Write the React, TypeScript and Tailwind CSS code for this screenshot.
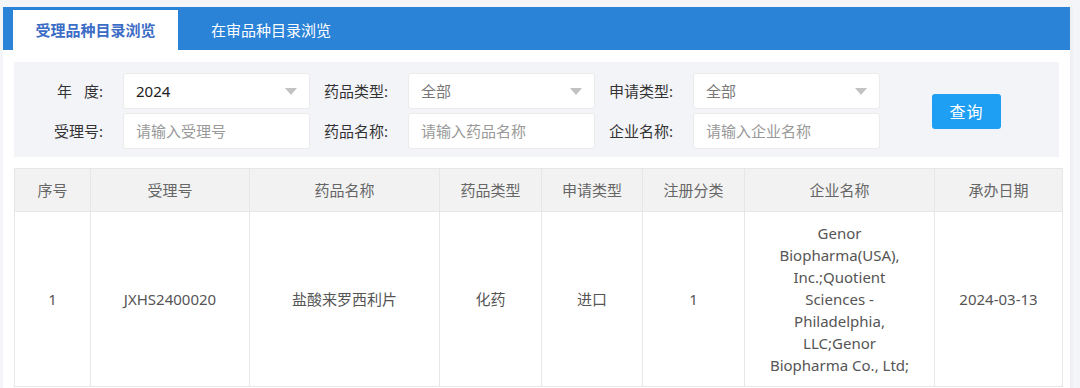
const font = { fontFamily: '"Microsoft YaHei", "Noto Sans", "Noto Sans CJK SC", sans-serif' };

const filters = [
  [
    { label: "年度", value: "2024", select: true, dark: true },
    { label: "药品类型", value: "全部", select: true },
    { label: "申请类型", value: "全部", select: true },
  ],
  [
    { label: "受理号", value: "请输入受理号" },
    { label: "药品名称", value: "请输入药品名称" },
    { label: "企业名称", value: "请输入企业名称" },
  ],
];

const columns = [
  { title: "序号", w: "w-[76px]" },
  { title: "受理号", w: "w-[159px]" },
  { title: "药品名称", w: "w-[190px]" },
  { title: "药品类型", w: "w-[102px]" },
  { title: "申请类型", w: "w-[101px]" },
  { title: "注册分类", w: "w-[102px]" },
  { title: "企业名称", w: "w-[190px]" },
  { title: "承办日期", w: "w-[128px]" },
];

const rows = [
  [
    "1",
    "JXHS2400020",
    "盐酸来罗西利片",
    "化药",
    "进口",
    "1",
    "Genor Biopharma(USA), Inc.;Quotient Sciences - Philadelphia, LLC;Genor Biopharma Co., Ltd;",
    "2024-03-13",
  ],
];

function Caret() {
  return (
    <svg width="12" height="7" viewBox="0 0 12 7" className="shrink-0">
      <path d="M0 0 L12 0 L6 7 Z" fill="#c2c2c2" />
    </svg>
  );
}

function Label({ text }: { text: string }) {
  return (
    <div className="flex w-[80px] shrink-0 justify-end pr-[2px] text-[15px] text-[#333]">
      {text === "年度" ? (
        <span>
          年<span className="ml-[12px]">度:</span>
        </span>
      ) : (
        <span>{text}:</span>
      )}
    </div>
  );
}

export default function App() {
  return (
    <div className="h-[388px] w-[1080px] overflow-hidden bg-[#f4f5f9] pt-[7px]" style={font}>
      <div className="ml-[3px] h-full w-[1070px] border-r-[3px] border-[#eef0f4] bg-white">
        {/* tabs */}
        <div className="flex h-[43px] items-end bg-[#2b83d8] pl-[10px]">
          <div className="flex h-[40px] w-[165px] items-center justify-center bg-white text-[15px] font-bold text-[#3b6cc6]">
            受理品种目录浏览
          </div>
          <div className="flex h-[40px] w-[186px] items-center justify-center text-[15px] text-white">
            在审品种目录浏览
          </div>
        </div>

        <div className="px-[11px] pt-[12px]">
          {/* filters */}
          <div className="flex h-[95px] items-start bg-[#f3f4f8] pl-[11px] pt-[11px]">
            <div className="flex flex-col gap-[4px]">
              {filters.map((row, ri) => (
                <div key={ri} className="flex">
                  {row.map((f) => (
                    <div key={f.label} className="flex items-center">
                      <Label text={f.label} />
                      <div className="ml-[18px] flex h-[36px] w-[187px] items-center justify-between rounded-[3px] border border-[#ebebeb] bg-white pl-[12px] pr-[12px] text-[15px]">
                        <span
                          className={
                            f.dark ? "text-[#222]" : f.select ? "text-[#777]" : "text-[#999]"
                          }
                        >
                          {f.value}
                        </span>
                        {f.select && <Caret />}
                      </div>
                    </div>
                  ))}
                </div>
              ))}
            </div>
            <button className="ml-[52px] mt-[21px] flex h-[35px] w-[69px] items-center justify-center rounded-[3px] bg-[#1f9ff3] text-[16px] tracking-[1px] text-white">
              查询
            </button>
          </div>

          {/* table */}
          <table className="mt-[11px] w-[1048px] table-fixed border-collapse text-[15px] text-[#555]">
            <colgroup>
              {columns.map((c) => (
                <col key={c.title} className={c.w} />
              ))}
            </colgroup>
            <thead>
              <tr className="h-[43px] bg-[#f2f2f2]">
                {columns.map((c) => (
                  <th key={c.title} className="border border-[#e6e6e6] text-center font-normal text-[#666]">
                    {c.title}
                  </th>
                ))}
              </tr>
            </thead>
            <tbody>
              {rows.map((r, i) => (
                <tr key={i}>
                  {r.map((cell, ci) => (
                    <td
                      key={ci}
                      className="border border-[#e6e6e6] px-[18px] py-[10px] text-center leading-[22px]"
                    >
                      {cell}
                    </td>
                  ))}
                </tr>
              ))}
            </tbody>
          </table>
        </div>
      </div>
    </div>
  );
}
